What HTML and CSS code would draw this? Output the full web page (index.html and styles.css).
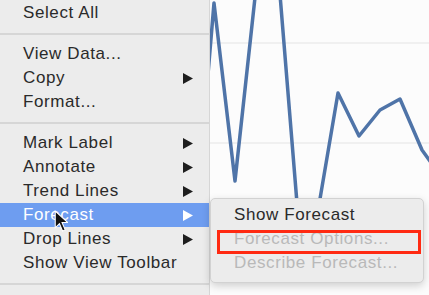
FILE: index.html
```html
<!DOCTYPE html>
<html>
<head>
<meta charset="utf-8">
<link rel="stylesheet" href="styles.css">
</head>
<body>
<div class="screen">
  <div class="menu">
    <div class="item">Select All</div>
    <div class="sep"></div>
    <div class="item">View Data...</div>
    <div class="item">Copy<svg class="arrow" viewBox="0 0 10 11"><polygon points="0,0 10,5.5 0,11"/></svg></div>
    <div class="item">Format...</div>
    <div class="sep"></div>
    <div class="item">Mark Label<svg class="arrow" viewBox="0 0 10 11"><polygon points="0,0 10,5.5 0,11"/></svg></div>
    <div class="item">Annotate<svg class="arrow" viewBox="0 0 10 11"><polygon points="0,0 10,5.5 0,11"/></svg></div>
    <div class="item">Trend Lines<svg class="arrow" viewBox="0 0 10 11"><polygon points="0,0 10,5.5 0,11"/></svg></div>
    <div class="item active">Forecast<svg class="arrow" viewBox="0 0 10 11"><polygon points="0,0 10,5.5 0,11"/></svg>
      <svg class="cursor" viewBox="0 0 13 21"><path d="M1,1 L1,17 L5,13 L8,20 L10.5,19 L7.5,12 L13,12 Z"/></svg>
    </div>
    <div class="item">Drop Lines<svg class="arrow" viewBox="0 0 10 11"><polygon points="0,0 10,5.5 0,11"/></svg></div>
    <div class="item">Show View Toolbar</div>
    <div class="sep"></div>
  </div>
  <div class="chart">
    <svg class="plot" viewBox="210 0 219 295" preserveAspectRatio="none">
      <line x1="210" y1="43" x2="429" y2="43" class="grid"/>
      <line x1="210" y1="143" x2="429" y2="143" class="grid"/>
      <polyline class="series" points="205,110 214,3 235,181 258,-30 278,-30 300,240 313,240 338,93 359,136 380,110 400,99 422,150 440,175"/>
    </svg>
    <div class="submenu">
      <div class="item">Show Forecast</div>
      <div class="item disabled marked">Forecast Options...</div>
      <div class="item disabled">Describe Forecast...</div>
    </div>
  </div>
</div>
</body>
</html>
```
FILE: styles.css
```css
html, body {
  margin: 0;
  padding: 0;
  width: 429px;
  height: 295px;
  overflow: hidden;
  background: #ececec;
}
.screen {
  display: flex;
  width: 429px;
  height: 295px;
  font-family: "Liberation Sans", Arial, sans-serif;
  font-size: 17px;
  letter-spacing: 0.6px;
  color: #2a2a2a;
}
.menu {
  width: 209px;
  flex: none;
  background: #ececec;
  border-right: 1px solid #d6d6d6;
  padding-top: 1px;
}
.item {
  position: relative;
  height: 24px;
  line-height: 24px;
  padding-left: 23px;
  padding-right: 16px;
  display: flex;
  align-items: center;
  justify-content: space-between;
  white-space: nowrap;
}
.item.active {
  background: #6e9df0;
  color: #fff;
}
.arrow {
  width: 10px;
  height: 11px;
  fill: #1e1e1e;
}
.active .arrow {
  fill: #ffffff;
}
.sep {
  height: 2px;
  margin: 8px 0 7px;
  background: #d6d6d6;
}
.cursor {
  position: absolute;
  left: 54px;
  top: 7px;
  width: 14px;
  height: 22px;
  fill: #111;
  stroke: #fff;
  stroke-width: 1;
}
.chart {
  position: relative;
  flex: 1;
  background: #fcfcfc;
}
.plot {
  display: block;
  width: 100%;
  height: 100%;
}
.grid {
  stroke: #ececec;
  stroke-width: 1.5;
}
.series {
  fill: none;
  stroke: #4f74a8;
  stroke-width: 3.5;
  stroke-linejoin: round;
  stroke-linecap: round;
}
.submenu {
  position: absolute;
  left: 0;
  top: 198px;
  width: 212px;
  padding: 4px 0 7px;
  background: #ececec;
  border: 1px solid #d2d2d2;
  border-radius: 5px;
  box-shadow: 0 3px 8px rgba(0, 0, 0, 0.18);
}
.submenu .item {
  padding-left: 23px;
}
.item.disabled {
  color: #b9b9b9;
}
.item.marked::after {
  content: "";
  position: absolute;
  left: 6px;
  top: 3px;
  width: 198px;
  height: 18px;
  border: 3px solid #ff2a12;
}
```
